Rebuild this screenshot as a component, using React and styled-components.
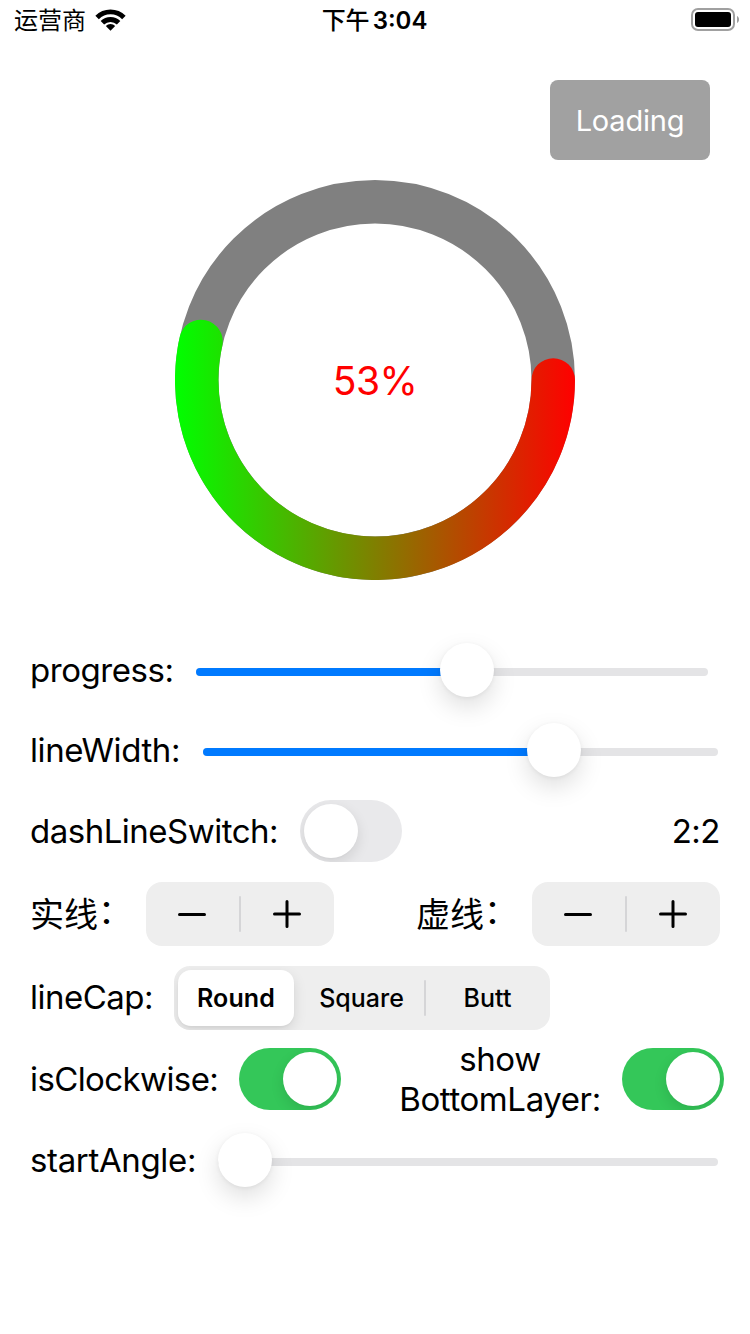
import React from "react";
import styled, { createGlobalStyle } from "styled-components";

const GlobalStyle = createGlobalStyle`
  * { box-sizing: border-box; }
  body {
    margin: 0;
    background: #fff;
    color: #000;
    font-family: Inter, "Noto Sans CJK SC", sans-serif;
  }
  button { border: 0; background: none; padding: 0; font: inherit; color: inherit; }
`;

const Screen = styled.div`
  width: 750px;
  height: 1334px;
  overflow: hidden;
  background: #fff;
`;

const StatusBar = styled.header`
  height: 40px;
  padding: 0 11px 0 14px;
  display: grid;
  grid-template-columns: 1fr auto 1fr;
  align-items: center;
  font-size: 24px;
  line-height: 40px;
`;

const Carrier = styled.div`
  display: flex;
  align-items: center;
  gap: 9px;
  line-height: 42px;
`;

const Time = styled.div`
  display: flex;
  gap: 3px;
  margin-right: 4px;
  line-height: 42px;
  font-weight: 500;
`;

const Clock = styled.span`
  font-size: 24px;
  font-weight: 600;
`;

const Battery = styled.svg`
  justify-self: end;
  margin-bottom: 2px;
`;

const ButtonBar = styled.div`
  display: flex;
  justify-content: flex-end;
  padding: 40px 40px 20px;
`;

const LoadingButton = styled.button`
  width: 160px;
  height: 80px;
  border-radius: 8px;
  background: #a1a1a1;
  color: #fff;
  font-size: 29px;
  letter-spacing: -0.2px;
`;

const RingArea = styled.div`
  display: grid;
  place-items: center;
  height: 400px;
  margin-bottom: 60px;
  > * { grid-area: 1 / 1; }
`;

const Percent = styled.div`
  color: #f00;
  font-size: 39px;
  letter-spacing: -0.6px;
`;

const Controls = styled.main`
  display: flex;
  flex-direction: column;
  gap: 20px;
  padding-left: 30px;
`;

const Row = styled.div`
  display: flex;
  align-items: center;
  height: ${(p) => p.$height}px;
  margin-top: ${(p) => p.$shift || 0}px;
  padding-right: ${(p) => p.$end ?? 30}px;
`;

const Label = styled.div`
  flex: none;
  width: ${(p) => p.$width}px;
  font-size: 33px;
  line-height: 40px;
  white-space: pre;
  letter-spacing: ${(p) => p.$spacing ?? -0.5}px;
  text-align: ${(p) => p.$align || "left"};
`;

const CapLabel = styled(Label)`
  padding-bottom: 2px;
`;

const CjkLabel = styled(Label)`
  display: flex;
  padding-bottom: 3px;
  font-family: "Noto Sans CJK SC", sans-serif;
  font-size: 34px;
  letter-spacing: 0;
`;

const Colon = styled.span`
  margin-top: -3px;
`;

const Spacer = styled.div`
  flex: ${(p) => (p.$width ? `0 0 ${p.$width}px` : 1)};
`;

const SliderBox = styled.div`
  position: relative;
  flex: 1;
  display: flex;
  align-items: center;
  height: 60px;
  padding-top: 4px;
`;

const Track = styled.div`
  flex: 1;
  height: 8px;
  border-radius: 4px;
  overflow: hidden;
  background: #e4e4e6;
`;

const Fill = styled.div`
  height: 100%;
  background: #007aff;
`;

const Thumb = styled.div`
  position: absolute;
  top: 3px;
  width: 54px;
  height: 54px;
  border-radius: 50%;
  background: #fff;
  box-shadow: 0 10px 24px rgba(0, 0, 0, 0.13), 0 1px 4px rgba(0, 0, 0, 0.06);
`;

const SwitchTrack = styled.div`
  flex: none;
  display: flex;
  justify-content: ${(p) => (p.$on ? "flex-end" : "flex-start")};
  width: 102px;
  height: 62px;
  padding: 4px;
  border-radius: 31px;
  overflow: hidden;
  background: ${(p) => (p.$on ? "#34c759" : "#e9e9eb")};
`;

const Knob = styled.div`
  width: 54px;
  height: 54px;
  border-radius: 50%;
  background: #fff;
  box-shadow: 0 5px 14px rgba(0, 0, 0, 0.11), 0 1px 2px rgba(0, 0, 0, 0.02);
`;

const StepperBox = styled.div`
  flex: none;
  display: flex;
  align-items: center;
  width: 188px;
  height: 64px;
  border-radius: 16px;
  background: #eeeeee;
`;

const StepButton = styled.button`
  width: 93px;
  height: 100%;
  padding-right: ${(p) => p.$inset}px;
  display: grid;
  place-items: center;
`;

const Divider = styled.i`
  flex: none;
  width: 2px;
  height: 36px;
  border-radius: 1px;
  background: #d5d5d7;
`;

const Segmented = styled.div`
  display: flex;
  align-items: center;
  width: 376px;
  height: 64px;
  padding-left: 4px;
  border-radius: 16px;
  overflow: hidden;
  background: #eeeeee;
`;

const Segment = styled.button`
  flex: none;
  width: ${(p) => p.$width}px;
  height: 56px;
  margin-right: ${(p) => (p.$selected ? 5 : 0)}px;
  border-radius: 13px;
  font-size: 25px;
  font-weight: ${(p) => (p.$selected ? 600 : 500)};
  letter-spacing: ${(p) => (p.$selected ? 0.1 : 0)}px;
  background: ${(p) => (p.$selected ? "#fff" : "transparent")};
  box-shadow: ${(p) => (p.$selected ? "0 5px 14px rgba(0, 0, 0, 0.11), 0 2px 2px rgba(0, 0, 0, 0.03)" : "none")};
`;

const Wifi = styled.svg`
  margin-bottom: 2px;
`;

function WifiIcon() {
  return (
    <Wifi width="31" height="22" viewBox="0 0 31 22">
      <path d="M15.5 21.8 L20.2 17 A6.8 6.8 0 0 0 10.8 17 Z" />
      <path d="M7.4 13.8 A11.5 11.5 0 0 1 23.6 13.8" fill="none" stroke="#000" strokeWidth="4.9" />
      <path d="M2.1 8.4 A18.9 18.9 0 0 1 28.9 8.4" fill="none" stroke="#000" strokeWidth="4.9" />
    </Wifi>
  );
}

function BatteryIcon() {
  return (
    <Battery width="48" height="24" viewBox="0 0 48 24">
      <rect x="1" y="1" width="42" height="21" rx="6" fill="none" stroke="#a0a0a0" strokeWidth="2" />
      <rect x="4" y="4" width="36" height="15" rx="3" />
      <path d="M46 8 C48.7 9 48.7 14 46 15 Z" fill="#a0a0a0" />
    </Battery>
  );
}

const RADIUS = 178.25;
const LINE = 43.5;

function Ring({ progress }) {
  const angle = progress * 2 * Math.PI;
  const x = 200 + RADIUS * Math.cos(angle);
  const y = 200 + RADIUS * Math.sin(angle);
  return (
    <svg width="400" height="400" viewBox="0 0 400 400">
      <defs>
        <linearGradient id="sweep" gradientUnits="userSpaceOnUse" x1="0" y1="0" x2="400" y2="0">
          <stop offset="0" stopColor="#00ff00" />
          <stop offset="1" stopColor="#ff0000" />
        </linearGradient>
      </defs>
      <circle cx="200" cy="200" r={RADIUS} fill="none" stroke="#808080" strokeWidth={LINE} />
      <path
        d={`M${200 + RADIUS} 200 A${RADIUS} ${RADIUS} 0 1 1 ${x} ${y}`}
        fill="none"
        stroke="url(#sweep)"
        strokeWidth={LINE}
        strokeLinecap="round"
      />
    </svg>
  );
}

function Slider({ value }) {
  const left = `calc((100% - 54px) * ${value})`;
  return (
    <SliderBox>
      <Track>
        <Fill style={{ width: value ? `calc((100% - 54px) * ${value} + 27px)` : 0 }} />
      </Track>
      <Thumb style={{ left }} />
    </SliderBox>
  );
}

function Switch({ on }) {
  return (
    <SwitchTrack $on={on} role="switch" aria-checked={!!on}>
      <Knob />
    </SwitchTrack>
  );
}

function Stepper() {
  return (
    <StepperBox>
      <StepButton $inset={1} aria-label="decrement">
        <svg width="28" height="28" viewBox="0 0 28 28" stroke="#000" strokeWidth="3" strokeLinecap="round">
          <path d="M1.5 14.5H26.5" />
        </svg>
      </StepButton>
      <Divider />
      <StepButton $inset={2} aria-label="increment">
        <svg width="28" height="28" viewBox="0 0 28 28" stroke="#000" strokeWidth="3" strokeLinecap="round">
          <path d="M1.5 14H26.5M14 1.5V26.5" />
        </svg>
      </StepButton>
    </StepperBox>
  );
}

export default function App() {
  return (
    <Screen>
      <GlobalStyle />
      <StatusBar>
        <Carrier>
          运营商
          <WifiIcon />
        </Carrier>
        <Time>
          下午<Clock>3:04</Clock>
        </Time>
        <BatteryIcon />
      </StatusBar>
      <ButtonBar>
        <LoadingButton>Loading</LoadingButton>
      </ButtonBar>
      <RingArea>
        <Ring progress={0.5347} />
        <Percent>53%</Percent>
      </RingArea>
      <Controls>
        <Row $height={60} $end={42}>
          <Label $width={166} $spacing={-0.45}>progress:</Label>
          <Slider value={0.5328} />
        </Row>
        <Row $height={60} $end={32}>
          <Label $width={173} $spacing={-0.4}>lineWidth:</Label>
          <Slider value={0.703} />
        </Row>
        <Row $height={62}>
          <Label $width={270}>dashLineSwitch:</Label>
          <Switch />
          <Spacer />
          <Label>2:2</Label>
        </Row>
        <Row $height={64}>
          <CjkLabel $width={116}>实线<Colon>：</Colon></CjkLabel>
          <Stepper />
          <Spacer />
          <CjkLabel $width={116}>虚线<Colon>：</Colon></CjkLabel>
          <Stepper />
        </Row>
        <Row $height={64}>
          <CapLabel $width={144}>lineCap:</CapLabel>
          <Segmented>
            <Segment $selected $width={116}>Round</Segment>
            <Segment $width={125}>Square</Segment>
            <Divider />
            <Segment $width={123}>Butt</Segment>
          </Segmented>
        </Row>
        <Row $height={62} $shift={-2} $end={26}>
          <Label $width={209} $spacing={-0.6}>isClockwise:</Label>
          <Switch on />
          <Spacer />
          <Label $width={204} $spacing={-0.4} $align="center">{"show\nBottomLayer:"}</Label>
          <Spacer $width={20} />
          <Switch on />
        </Row>
        <Row $height={60} $end={32}>
          <Label $width={188} $spacing={-0.35}>startAngle:</Label>
          <Slider value={0} />
        </Row>
      </Controls>
    </Screen>
  );
}
